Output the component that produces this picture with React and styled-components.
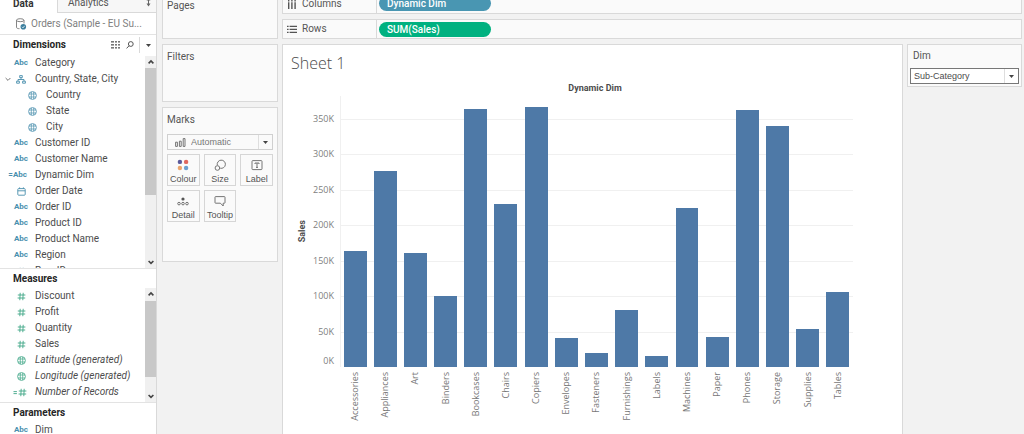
import React from "react";
import styled, { createGlobalStyle, css } from "styled-components";

const Global = createGlobalStyle`
  *, *::before, *::after { box-sizing: border-box; }
  body {
    margin: 0;
    background: #f2f2f2;
    color: #4c4c4c;
    font: 10px/16px Roboto, "Liberation Sans", sans-serif;
  }
  button, select { font: inherit; color: inherit; }
  ul { list-style: none; margin: 0; padding: 0; }
  svg { display: block; flex: none; }
`;

const BLUE = "#4a8fae";
const GREEN = "#3fa687";

const Workspace = styled.div`
  display: flex;
  height: 100vh;
  overflow: hidden;
`;

/* ---------- data pane ---------- */

const DataPane = styled.aside`
  flex: none;
  display: flex;
  flex-direction: column;
  width: 157px;
  background: #fff;
  border-right: 1px solid #d9d9d9;
`;

const Tabs = styled.div`
  flex: none;
  display: flex;
  height: 13px;
`;

const Tab = styled.button`
  flex: ${(p) => (p.$active ? "none" : "1")};
  display: flex;
  align-items: flex-end;
  justify-content: space-between;
  width: ${(p) => (p.$active ? "57px" : "auto")};
  padding: 0 5px 1px ${(p) => (p.$active ? "13px" : "10px")};
  border: 0;
  background: ${(p) => (p.$active ? "#fff" : "#f7f7f7")};
  font-size: 10px;
  line-height: 16px;
  font-weight: ${(p) => (p.$active ? 700 : 400)};
  color: ${(p) => (p.$active ? "#333" : "#555")};
  ${(p) =>
    !p.$active &&
    css`
      border-left: 1px solid #d9d9d9;
      border-bottom: 1px solid #d9d9d9;
    `}
`;

const Source = styled.div`
  flex: none;
  display: flex;
  align-items: center;
  gap: 4px;
  height: 21px;
  padding-left: 15px;
  color: #808080;
  white-space: nowrap;
`;

const SectionHead = styled.div`
  flex: none;
  display: flex;
  align-items: center;
  height: ${(p) => p.$height}px;
  padding-left: 13px;
  border-top: 1px solid #e3e3e3;
`;

const SectionTitle = styled.h2`
  flex: 1;
  margin: 0;
  font-size: 10px;
  line-height: 16px;
  font-weight: 700;
  color: #262626;
`;

const Tool = styled.button`
  display: flex;
  align-items: center;
  height: 16px;
  padding: 0;
  border: 0;
  background: none;
  margin-right: 5px;
`;

const MenuTool = styled(Tool)`
  margin: 0;
  padding: 0 5px 0 6px;
  border-left: 1px solid #d9d9d9;
`;

const ListPane = styled.div`
  flex: none;
  display: flex;
  height: ${(p) => p.$height}px;
  overflow: hidden;
`;

const Fields = styled.ul`
  flex: 1;
  min-width: 0;
`;

const Field = styled.li`
  display: flex;
  align-items: center;
  height: 16px;
  padding-left: ${(p) => (p.$nested ? "11px" : "0")};
  font-style: ${(p) => (p.$generated ? "italic" : "normal")};
  color: #4c4c4c;
  white-space: nowrap;
`;

const Caret = styled.span`
  width: 12px;
  padding-left: 5px;
`;

const Glyph = styled.span`
  display: flex;
  justify-content: ${(p) => (p.$calc ? "flex-end" : "center")};
  align-items: center;
  width: 18px;
  padding-right: ${(p) => (p.$calc ? "3px" : "0")};
  margin-right: 5px;
  color: ${(p) => (p.$measure ? GREEN : BLUE)};
  font-size: 8px;
  font-style: normal;
  font-weight: 700;
`;

const Scrollbar = styled.div`
  flex: none;
  display: flex;
  flex-direction: column;
  align-items: center;
  width: 11px;
  margin-top: ${(p) => p.$top}px;
  background: #f0f0f0;
`;

const Thumb = styled.div`
  width: 11px;
  height: ${(p) => p.$size}px;
  margin: ${(p) => p.$gap}px 0 auto;
  background: #c8c8c8;
`;

/* ---------- cards and shelves ---------- */

const Cards = styled.div`
  flex: none;
  display: flex;
  flex-direction: column;
  gap: 5px;
  width: 116px;
  margin-left: 5px;
`;

const Card = styled.section`
  flex: none;
  height: ${(p) => (p.$height ? p.$height + "px" : "auto")};
  padding: ${(p) => p.$pad || "4px"};
  background: #fafafa;
  border: 1px solid #d9d9d9;
  border-top-width: ${(p) => (p.$cut ? "0" : "1px")};
`;

const CardTitle = styled.h3`
  display: block;
  margin: 0;
  padding-left: ${(p) => (p.$inset ? "3px" : "0")};
  font-size: 10px;
  line-height: ${(p) => (p.$tight ? "12px" : "16px")};
  font-weight: 400;
  color: #555;
`;

const Drop = styled.div`
  display: flex;
  align-items: center;
  height: 16px;
  margin-top: ${(p) => (p.$strong ? "4px" : "6px")};
  padding-left: ${(p) => (p.$strong ? "3px" : "7px")};
  gap: 5px;
  border: 1px solid ${(p) => (p.$strong ? "#777" : "#d0d0d0")};
  background: ${(p) => (p.$strong ? "#fff" : "#fafafa")};
  color: ${(p) => (p.$strong ? "#4c4c4c" : "#777")};
  font-family: "Liberation Sans", Arial, sans-serif;
  font-size: 9px;
`;

const DropSelect = styled.select`
  flex: 1;
  min-width: 0;
  height: 14px;
  padding: 0;
  border: 0;
  outline: 0;
  background: none;
  appearance: none;
  line-height: 14px;
`;

const DropArrow = styled.span`
  display: flex;
  align-items: center;
  justify-content: center;
  width: 14px;
  height: 14px;
  border-left: 1px solid #dedede;
`;

const MarkGrid = styled.div`
  display: grid;
  grid-template-columns: repeat(3, minmax(0, 1fr));
  gap: 4px;
  margin-top: 4px;
`;

const Mark = styled.button`
  display: flex;
  flex-direction: column;
  align-items: center;
  justify-content: space-between;
  height: 32px;
  padding: 4px 0 0;
  border: 1px solid #d6d6d6;
  background: #fafafa;
  font-family: "Liberation Sans", Arial, sans-serif;
  font-size: 9px;
  color: #555;
`;

const MarkLabel = styled.span`
  line-height: 12px;
`;

const Main = styled.main`
  flex: 1;
  min-width: 0;
  display: flex;
  flex-direction: column;
  gap: 5px;
  margin: 0 2px 0 4px;
`;

const Shelf = styled.div`
  flex: none;
  display: flex;
  align-items: ${(p) => (p.$cut ? "flex-end" : "center")};
  height: ${(p) => (p.$cut ? "14px" : "20px")};
  background: #fafafa;
  border: 1px solid #d9d9d9;
  border-top-width: ${(p) => (p.$cut ? "0" : "1px")};
`;

const ShelfName = styled.div`
  display: flex;
  align-items: center;
  gap: 5px;
  width: 94px;
  height: 18px;
  padding-left: 4px;
  border-right: 1px solid #d9d9d9;
  color: #555;
`;

const Pill = styled.button`
  width: 112px;
  height: 15px;
  margin: 0 0 ${(p) => (p.$measure ? "0" : "2px")} 2px;
  padding: 0 8px;
  border: 0;
  border-radius: 8px;
  background: ${(p) => (p.$measure ? "#00b180" : "#4996b2")};
  color: #fff;
  font-weight: 500;
  line-height: 15px;
  text-align: left;
`;

const View = styled.div`
  flex: 1;
  display: flex;
  align-items: stretch;
  gap: 4px;
`;

const Sheet = styled.section`
  flex: 1;
  min-width: 0;
  padding: 8px 49px 0 8px;
  background: #fff;
  border: 1px solid #d9d9d9;
  border-bottom: 0;
  font-family: "Open Sans", "Noto Sans", sans-serif;
`;

const SheetTitle = styled.h1`
  margin: 0;
  font-size: 16px;
  line-height: 20px;
  font-weight: 300;
  color: #4c4c4c;
`;

const Side = styled.div`
  flex: none;
  width: 115px;
`;

/* ---------- chart ---------- */

const Chart = styled.div`
  display: grid;
  grid-template-columns: 22px 21px minmax(0, 1fr);
  grid-template-rows: 16px 271px auto;
  margin-top: 7px;
`;

const ChartHead = styled.div`
  grid-column: 3;
  font-family: Roboto, sans-serif;
  font-size: 9px;
  line-height: 16px;
  font-weight: 700;
  text-align: center;
  padding-left: 3px;
`;

const AxisTitle = styled.div`
  grid-area: 2 / 1;
  align-self: center;
  justify-self: center;
  writing-mode: vertical-rl;
  transform: rotate(180deg);
  font-family: Roboto, sans-serif;
  font-size: 9px;
  line-height: 12px;
  font-weight: 700;
`;

const Bands = styled.div`
  grid-area: 2 / ${(p) => p.$column};
  display: flex;
  flex-direction: column;
  padding-top: 23px;
  border-left: ${(p) => (p.$lined ? "1px solid #f0f0f0" : "0")};
  margin-left: ${(p) => (p.$lined ? "6px" : "0")};
`;

const Band = styled.div`
  flex: 1;
  display: flex;
  flex-direction: column;
  justify-content: space-between;
  border-top: ${(p) => (p.$lined ? "1px solid #f0f0f0" : "0")};
`;

const Tick = styled.span`
  height: ${(p) => (p.$base ? "12px" : "0")};
  line-height: ${(p) => (p.$base ? "12px" : "0")};
  font-size: 9px;
  text-align: right;
  color: #808080;
`;

const Bars = styled.div`
  grid-area: 2 / 3;
  display: flex;
  align-items: flex-end;
  margin-left: 6px;
`;

const Slot = styled.div`
  flex: 1;
  display: flex;
  align-items: flex-end;
  justify-content: center;
  height: 100%;
`;

const Bar = styled.div`
  width: 76%;
  background: #4e79a7;
`;

const Names = styled.div`
  grid-area: 3 / 3;
  display: flex;
  margin: 5px 0 0 6px;
`;

const Name = styled.div`
  flex: 1;
  display: flex;
  align-items: flex-start;
  justify-content: center;
`;

const NameText = styled.span`
  writing-mode: vertical-rl;
  transform: rotate(180deg);
  font-size: 9px;
  line-height: 12px;
  color: #777;
`;

/* ---------- icons ---------- */

const Globe = () => (
  <svg width="9" height="9" viewBox="0 0 9 9" fill="none" stroke="currentColor" strokeWidth="0.8">
    <circle cx="4.5" cy="4.5" r="3.9" />
    <path d="M.9 3h7.2M.9 6h7.2M3.3 .8v7.4M5.7 .8v7.4" strokeWidth=".7" />
  </svg>
);

const Hash = ({ calc }) => (
  <svg width={calc ? 14 : 9} height="9" viewBox={calc ? "-5 0 14 9" : "0 0 9 9"} fill="none" stroke="currentColor" strokeWidth="0.9">
    <path d="M3.2 .8 2.8 8.2M6.2 .8 5.8 8.2M.8 3h7.6M.6 6h7.6" />
    {calc && <path d="M-4.5 3.6h3.4M-4.5 5.6h3.4" strokeWidth=".9" />}
  </svg>
);

const Tree = () => (
  <svg width="10" height="9" viewBox="0 0 10 9" fill="none" stroke="currentColor" strokeWidth="0.9">
    <path d="M3.7 .6h2.6v2H3.7zM.6 6.2h2.8v2H.6zM6.6 6.2h2.8v2H6.6zM5 2.6v2M2 6.2V4.5h6v1.7" />
  </svg>
);

const Calendar = () => (
  <svg width="9" height="9" viewBox="0 0 9 9" fill="none" stroke="currentColor" strokeWidth="0.9">
    <rect x=".8" y="1.6" width="7.4" height="6.6" rx=".8" />
    <path d="M.8 3.8h7.4M2.6 .4v1.4M6.4 .4v1.4" />
  </svg>
);

const Chevron = ({ up, light }) => (
  <svg width="6" height="12" viewBox="0 0 6 12" fill="none" stroke={light ? "#777" : "#444"} strokeWidth={light ? 1 : 1.6}>
    <path d={up ? "M.6 7.4 3 5l2.4 2.4" : "M.6 5 3 7.4 5.4 5"} />
  </svg>
);

const Triangle = () => (
  <svg width="5" height="3" viewBox="0 0 5 3" fill="#444">
    <path d="M0 0h5L2.5 3z" />
  </svg>
);

const Database = () => (
  <svg width="12" height="12" viewBox="0 0 12 12" fill="none" stroke="#777" strokeWidth="0.9">
    <path d="M1.5 2.2v7.2c0 .8 1.2 1.2 3 1.3M9 2.2v3.3" />
    <ellipse cx="5.2" cy="2.2" rx="3.7" ry="1.5" />
    <circle cx="8.3" cy="8.7" r="2.8" fill="#3c7f9e" stroke="none" />
    <path d="m7 8.8 1 1 1.7-2" stroke="#fff" strokeWidth=".8" />
  </svg>
);

const Updown = () => (
  <svg width="5" height="13" viewBox="0 0 5 13" fill="#666">
    <path d="M2.5 0 4.5 2.6H.5zM2.5 8.4 .5 5.4h4zM2 2h1v4H2z" />
  </svg>
);

const GridIcon = () => (
  <svg width="10" height="8" viewBox="0 0 10 8" fill="#777">
    {[0, 3, 6].map((y) => [0, 4, 7].map((x) => <rect key={`${x}-${y}`} x={x} y={y} width={x ? 2 : 3} height="1.6" />))}
  </svg>
);

const Search = () => (
  <svg width="8" height="8" viewBox="0 0 8 8" fill="none" stroke="#555" strokeWidth="1">
    <circle cx="4.8" cy="3" r="2.4" />
    <path d="M3 4.8.6 7.4" />
  </svg>
);

const ColumnsIcon = () => (
  <svg width="10" height="9" viewBox="0 0 10 9" fill="#555">
    <path d="M1 0h1.4v1.4H1zM4.2 0h1.4v1.4H4.2zM7.4 0h1.4v1.4H7.4zM1 2.2h1.4V9H1zM4.2 2.2h1.4V9H4.2zM7.4 2.2h1.4V9H7.4z" />
  </svg>
);

const RowsIcon = () => (
  <svg width="10" height="9" viewBox="0 0 10 9" fill="#555">
    <path d="M0 .8h1.6v1.2H0zM0 3.8h1.6V5H0zM0 6.8h1.6V8H0zM2.6 .8H10v1.2H2.6zM2.6 3.8H10V5H2.6zM2.6 6.8H10V8H2.6z" />
  </svg>
);

const BarsIcon = () => (
  <svg width="11" height="9" viewBox="0 0 11 9" fill="none" stroke="#666" strokeWidth=".9">
    <path d="M.6 4.2h1.8v4.2H.6zM4.4 3.2h1.8v5.2H4.4zM8.2 .6H10v7.8H8.2z" />
  </svg>
);

const ColourIcon = () => (
  <svg width="12" height="12" viewBox="0 0 12 12">
    <circle cx="2.9" cy="2.9" r="2.2" fill="#5b5a9b" />
    <circle cx="9.1" cy="2.9" r="2.2" fill="#e0675f" />
    <circle cx="2.9" cy="9" r="2.2" fill="#eba56d" />
    <circle cx="9.1" cy="9" r="2.2" fill="#6c9fd0" />
  </svg>
);

const SizeIcon = () => (
  <svg width="12" height="12" viewBox="0 0 12 12" fill="none" stroke="#666" strokeWidth=".9">
    <path d="M3.3 6.2A4.1 4.1 0 1 1 6.2 9.2" />
    <circle cx="3.4" cy="9" r="2.3" />
  </svg>
);

const LabelIcon = () => (
  <svg width="12" height="12" viewBox="0 0 12 12" fill="none" stroke="#666" strokeWidth=".9">
    <rect x="1" y="1.6" width="10" height="9" rx=".8" />
    <path d="M4 5V4h4v1M6 4v4.4M5 8.4h2" />
  </svg>
);

const DetailIcon = () => (
  <svg width="12" height="12" viewBox="0 0 12 12" fill="none" stroke="#666" strokeWidth=".9">
    <circle cx="6" cy="4" r="1.6" fill="#555" stroke="none" />
    <circle cx="2" cy="8.6" r="1.3" />
    <circle cx="6" cy="8.6" r="1.3" />
    <circle cx="10" cy="8.6" r="1.3" />
  </svg>
);

const TooltipIcon = () => (
  <svg width="12" height="12" viewBox="0 0 12 12" fill="none" stroke="#666" strokeWidth=".9">
    <path d="M1.6 1.6h8.8q.6 0 .6.6v5.4q0 .6-.6.6H9.2v2.8L6.4 8.2H1.6Q1 8.2 1 7.6V2.2q0-.6.6-.6z" />
  </svg>
);

/* ---------- data ---------- */

const dimensions = [
  { name: "Category" },
  { name: "Country, State, City", icon: <Tree />, open: true },
  { name: "Country", icon: <Globe />, nested: true },
  { name: "State", icon: <Globe />, nested: true },
  { name: "City", icon: <Globe />, nested: true },
  { name: "Customer ID" },
  { name: "Customer Name" },
  { name: "Dynamic Dim", icon: "=Abc", calc: true },
  { name: "Order Date", icon: <Calendar /> },
  { name: "Order ID" },
  { name: "Product ID" },
  { name: "Product Name" },
  { name: "Region" },
  { name: "Row ID", icon: <Hash /> },
];

const measures = [
  { name: "Discount", icon: <Hash /> },
  { name: "Profit", icon: <Hash /> },
  { name: "Quantity", icon: <Hash /> },
  { name: "Sales", icon: <Hash /> },
  { name: "Latitude (generated)", icon: <Globe />, generated: true },
  { name: "Longitude (generated)", icon: <Globe />, generated: true },
  { name: "Number of Records", icon: <Hash calc />, generated: true, calc: true },
];

const marks = [
  ["Colour", ColourIcon],
  ["Size", SizeIcon],
  ["Label", LabelIcon],
  ["Detail", DetailIcon],
  ["Tooltip", TooltipIcon],
];

const SCALE_MAX = 382;

const sales = [
  ["Accessories", 164],
  ["Appliances", 276],
  ["Art", 161],
  ["Binders", 100],
  ["Bookcases", 364],
  ["Chairs", 230],
  ["Copiers", 366],
  ["Envelopes", 41],
  ["Fasteners", 20],
  ["Furnishings", 81],
  ["Labels", 16],
  ["Machines", 224],
  ["Paper", 43],
  ["Phones", 362],
  ["Storage", 340],
  ["Supplies", 53],
  ["Tables", 106],
];

const ticks = ["350K", "300K", "250K", "200K", "150K", "100K", "50K"];

const FieldList = ({ items, measure }) => (
  <Fields>
    {items.map((f) => (
      <Field key={f.name} $nested={f.nested} $generated={f.generated}>
        <Caret>{f.open && <Chevron light />}</Caret>
        <Glyph $measure={measure} $calc={f.calc}>{f.icon || "Abc"}</Glyph>
        {f.name}
      </Field>
    ))}
  </Fields>
);

export default function App() {
  return (
    <Workspace>
      <Global />
      <DataPane>
        <Tabs>
          <Tab $active>Data</Tab>
          <Tab>
            Analytics
            <Updown />
          </Tab>
        </Tabs>
        <Source>
          <Database />
          Orders (Sample - EU Su...
        </Source>
        <SectionHead $height={21}>
          <SectionTitle>Dimensions</SectionTitle>
          <Tool aria-label="View data"><GridIcon /></Tool>
          <Tool aria-label="Find field"><Search /></Tool>
          <MenuTool aria-label="Pane menu"><Triangle /></MenuTool>
        </SectionHead>
        <ListPane $height={213}>
          <FieldList items={dimensions} />
          <Scrollbar $top={1}>
            <Chevron up />
            <Thumb $gap={0} $size={127} />
            <Chevron />
          </Scrollbar>
        </ListPane>
        <SectionHead $height={20}>
          <SectionTitle>Measures</SectionTitle>
        </SectionHead>
        <ListPane $height={114}>
          <FieldList items={measures} measure />
          <Scrollbar $top={0}>
            <Chevron up />
            <Thumb $gap={1} $size={76} />
            <Chevron />
          </Scrollbar>
        </ListPane>
        <SectionHead $height={20}>
          <SectionTitle>Parameters</SectionTitle>
        </SectionHead>
        <FieldList items={[{ name: "Dim" }]} />
      </DataPane>

      <Cards>
        <Card $cut $height={39} $pad="0 4px">
          <CardTitle $tight>Pages</CardTitle>
        </Card>
        <Card $height={58}>
          <CardTitle>Filters</CardTitle>
        </Card>
        <Card $height={155}>
          <CardTitle>Marks</CardTitle>
          <Drop>
            <BarsIcon />
            <DropSelect aria-label="Mark type">
              <option>Automatic</option>
            </DropSelect>
            <DropArrow><Triangle /></DropArrow>
          </Drop>
          <MarkGrid>
            {marks.map(([label, Icon]) => (
              <Mark key={label}>
                <Icon />
                <MarkLabel>{label}</MarkLabel>
              </Mark>
            ))}
          </MarkGrid>
        </Card>
      </Cards>

      <Main>
        <Shelf $cut>
          <ShelfName><ColumnsIcon />Columns</ShelfName>
          <Pill>Dynamic Dim</Pill>
        </Shelf>
        <Shelf>
          <ShelfName><RowsIcon />Rows</ShelfName>
          <Pill $measure>SUM(Sales)</Pill>
        </Shelf>
        <View>
          <Sheet>
            <SheetTitle>Sheet 1</SheetTitle>
            <Chart>
              <ChartHead>Dynamic Dim</ChartHead>
              <AxisTitle>Sales</AxisTitle>
              <Bands $column={2}>
                {ticks.map((t, i) => (
                  <Band key={t}>
                    <Tick>{t}</Tick>
                    {i === ticks.length - 1 && <Tick $base>0K</Tick>}
                  </Band>
                ))}
              </Bands>
              <Bands $column={3} $lined>
                {ticks.map((t) => (
                  <Band key={t} $lined />
                ))}
              </Bands>
              <Bars>
                {sales.map(([name, value]) => (
                  <Slot key={name}>
                    <Bar style={{ height: `${(value / SCALE_MAX) * 100}%` }} />
                  </Slot>
                ))}
              </Bars>
              <Names>
                {sales.map(([name]) => (
                  <Name key={name}>
                    <NameText>{name}</NameText>
                  </Name>
                ))}
              </Names>
            </Chart>
          </Sheet>
          <Side>
            <Card $pad="3px 2px 2px">
              <CardTitle as="label" htmlFor="dim" $inset>Dim</CardTitle>
              <Drop $strong>
                <DropSelect id="dim">
                  <option>Sub-Category</option>
                </DropSelect>
                <DropArrow><Triangle /></DropArrow>
              </Drop>
            </Card>
          </Side>
        </View>
      </Main>
    </Workspace>
  );
}
